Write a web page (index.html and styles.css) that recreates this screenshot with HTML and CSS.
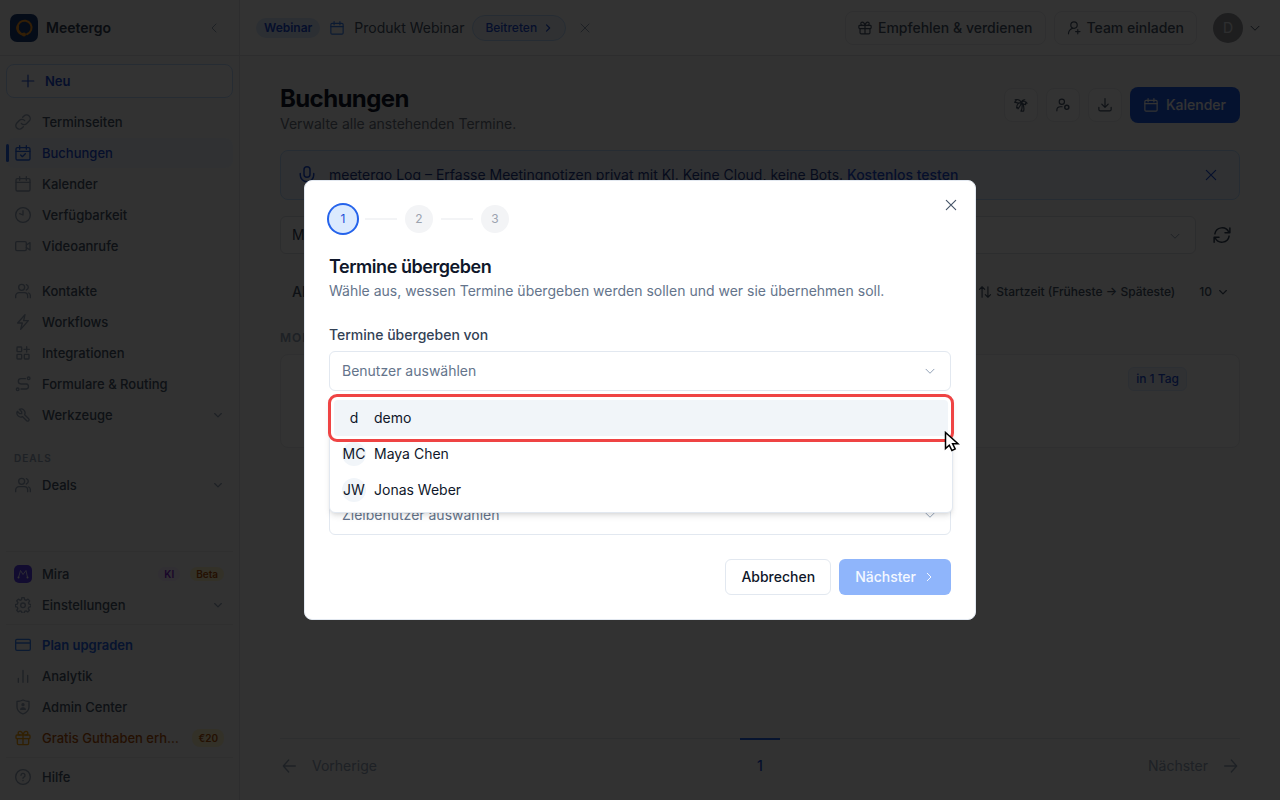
FILE: index.html
```html
<!DOCTYPE html>
<html lang="de">
<head>
    <meta charset="utf-8">
    <title>Buchungen - Meetergo</title>
    <link rel="stylesheet" href="styles.css">
</head>
<body>
    <svg class="sprite" aria-hidden="true">
        <symbol id="i-link" viewBox="0 0 24 24"><path d="M9.500 14a5.200 5.200 0 0 0 7.700.6l4-4a5.400 5.400 0 0 0-7.700-7.700l-2 2M14.500 10a5.200 5.200 0 0 0-7.700-.6l-4 4a5.400 5.400 0 0 0 7.700 7.700l2-2"/></symbol>
        <symbol id="i-calendar" viewBox="0 0 24 24"><rect x="1.500" y="4" width="21" height="18.500" rx="2"/><path d="M1.500 9.500h21M7 1v5.500M17 1v5.500"/></symbol>
        <symbol id="i-calendar-check" viewBox="0 0 24 24"><rect x="1.500" y="4" width="21" height="18.500" rx="2"/><path d="M1.500 9.500h21M7 1v5.500M17 1v5.500M8.500 15l2.500 2.500L15.500 13"/></symbol>
        <symbol id="i-clock" viewBox="0 0 24 24"><circle cx="12" cy="12" r="11"/><path d="M12 5.500V12L7 10"/></symbol>
        <symbol id="i-video" viewBox="0 0 24 24"><rect x="1" y="5.500" width="16" height="13.500" rx="2"/><path d="M17 10.500l5.500-3.500v11L17 14.500"/></symbol>
        <symbol id="i-users" viewBox="0 0 24 24"><circle cx="10" cy="6.500" r="4.500"/><path d="M1 22v-2.500a5 5 0 0 1 5-5h8a5 5 0 0 1 5 5V22M17 2.500a4.200 4.200 0 0 1 0 8M20.500 15a4.500 4.500 0 0 1 2.500 4.200V22"/></symbol>
        <symbol id="i-bolt" viewBox="0 0 24 24"><path d="M15 1L4 13.500h7L8.500 23 20 10h-7z"/></symbol>
        <symbol id="i-apps" viewBox="0 0 24 24"><rect x="3" y="3" width="7" height="7" rx="1"/><rect x="3" y="14" width="7" height="7" rx="1"/><rect x="14" y="14" width="7" height="7" rx="1"/><path d="M17.500 2.500v8M13.500 6.500h8"/></symbol>
        <symbol id="i-route" viewBox="0 0 24 24"><circle cx="20.500" cy="3.500" r="2"/><circle cx="4" cy="20" r="2"/><path d="M15.500 4H9a4 4 0 0 0 0 8h8a3.800 3.800 0 0 1 0 7.500H9"/></symbol>
        <symbol id="i-wrench" viewBox="0 0 24 24"><path d="M7 10h3V7L6.500 3.500a6 6 0 0 1 8 8l6 6a2.100 2.100 0 0 1-3 3l-6-6a6 6 0 0 1-8-8z"/></symbol>
        <symbol id="i-settings" viewBox="0 0 24 24"><path d="M10.200 1h3.600l.6 3 2.200 1 2.900-1.800 2.500 2.600-1.800 2.900 1 2.100 2.800.6v3l-3.100.8-.9 2.100 1.700 2.700-2.600 2.500-2.600-1.700-2.100.9-.7 2.500h-3.200l-.7-2.600-2.100-.9-2.700 1.700-2.400-2.500 1.600-2.600-.9-2.200-2.800-.7v-3l2.900-.7 1-2.200-1.800-2.800 2.500-2.500 2.600 1.700 2.200-.9z"/><circle cx="12" cy="12.500" r="3.500"/></symbol>
        <symbol id="i-card" viewBox="0 0 24 24"><rect x="1" y="3.500" width="22" height="16.500" rx="2"/><path d="M1 9h22"/></symbol>
        <symbol id="i-chart" viewBox="0 0 24 24"><path d="M5 21.500v-6M12 21.500V3.500M19 21.500V11"/></symbol>
        <symbol id="i-shield" viewBox="0 0 24 24"><path d="M12 1.500c3 1.500 6 2 9 2.200V12c0 5-4 8.500-9 10.500C7 20.500 3 17 3 12V3.700C6 3.500 9 3 12 1.500z"/><circle cx="12" cy="8.500" r="1.500" fill="currentColor"/><path d="M8.500 15.500c.5-3 6.500-3 7 0z" fill="currentColor"/></symbol>
        <symbol id="i-gift" viewBox="0 0 24 24"><rect x="1.500" y="7.500" width="21" height="5.500" rx="1.500"/><path d="M3.500 13v7a2 2 0 0 0 2 2h13a2 2 0 0 0 2-2v-7M12 7.500V22M12 7.500C11 3.500 9 2 7.500 2a2.500 2.500 0 0 0 0 5.500M12 7.500c1-4 3-5.500 4.500-5.500a2.500 2.500 0 0 1 0 5.500"/></symbol>
        <symbol id="i-help" viewBox="0 0 24 24"><circle cx="12" cy="12" r="11"/><path d="M9 9.500a3 3 0 1 1 4.300 2.700c-.9.400-1.300 1-1.300 1.800M12 17.200v.3"/></symbol>
        <symbol id="i-plus" viewBox="0 0 24 24"><path d="M12 2v20M2 12h20"/></symbol>
        <symbol id="i-down" viewBox="0 0 24 24"><path d="M4 8.500l8 8 8-8"/></symbol>
        <symbol id="i-left" viewBox="0 0 24 24"><path d="M16 4l-8 8 8 8"/></symbol>
        <symbol id="i-right" viewBox="0 0 24 24"><path d="M8.500 4.500L16 12l-7.500 7.500"/></symbol>
        <symbol id="i-close" viewBox="0 0 24 24"><path d="M4 4l16 16M20 4L4 20"/></symbol>
        <symbol id="i-user-plus" viewBox="0 0 24 24"><circle cx="12" cy="7" r="5.500"/><path d="M2.500 22c0-4 2.500-7.500 7-9.500M18.500 14.500v7.500M14.800 18.200h7.500"/></symbol>
        <symbol id="i-user-cog" viewBox="0 0 24 24"><circle cx="10" cy="6.500" r="4.500"/><path d="M1.500 22v-1.500c0-3.500 2.500-5.500 6-5.500h3"/><circle cx="18.500" cy="16" r="3.500" stroke-width="2.500"/></symbol>
        <symbol id="i-palm" viewBox="0 0 24 24"><path d="M13 8c2-3.500 7-3.500 9.500 1l-3-.5.500 3C17 11.500 15 10.500 13 8zM13 8C11 4.500 7 1.500 2 3l2 1.500L1 7c4 1.500 8 2 12 1zM13 8c-4-.5-8.500 2-8.500 9l2-.5.5 2C9.500 15.500 11.500 12 13 8zM13 8c0-3 2-5 5.500-5M13.500 10.500c1 4 .5 8-1.500 12h4.500c1-4 .500-8-1-12"/></symbol>
        <symbol id="i-download" viewBox="0 0 24 24"><path d="M12 1v15M6.500 10.500L12 16l5.500-5.500M1.500 16v3.500a2.500 2.500 0 0 0 2.500 2.500h16a2.500 2.500 0 0 0 2.500-2.500V16"/></symbol>
        <symbol id="i-mic" viewBox="0 0 24 24"><rect x="8" y="1" width="8" height="14" rx="4"/><path d="M3 10v2a9 9 0 0 0 18 0v-2M12 21v2"/></symbol>
        <symbol id="i-refresh" viewBox="0 0 24 24"><path d="M2.500 10.500a9.800 9.800 0 0 1 18.500-2.500M22.500 2.500V9H16M21.500 13.500A9.800 9.800 0 0 1 3 16M1.500 21.500V15H8"/></symbol>
        <symbol id="i-sort" viewBox="0 0 24 24"><path d="M7 21V3M2.500 7.500L7 3l4.500 4.500M17 3v18M12.500 16.500L17 21l4.500-4.500"/></symbol>
        <symbol id="i-arrow-left" viewBox="0 0 24 24"><path d="M20 12H2M10 3l-8 9 8 9"/></symbol>
        <symbol id="i-arrow-right" viewBox="0 0 24 24"><path d="M4 12h18M14 3l8 9-8 9"/></symbol>
    </svg>

    <div class="app">
        <aside class="sidebar">
            <div class="brand">
                <svg class="logo" viewBox="0 0 28 28"><rect width="28" height="28" rx="7" fill="#1d3f78"/><path d="M10 19a7 7 0 1 1 7 1.200" fill="none" stroke="#ff9a1f" stroke-width="2" stroke-linecap="round"/><path d="M14 20.500a6.500 6.500 0 0 1-6-9" fill="none" stroke="#ff9a1f" stroke-width="2.500"/><circle cx="14" cy="20.500" r="2" fill="#ff9a1f"/></svg>
                <span>Meetergo</span>
                <button class="plain" aria-label="Einklappen"><svg class="icon s12"><use href="#i-left"/></svg></button>
            </div>

            <button class="new"><svg class="icon s14"><use href="#i-plus"/></svg>Neu</button>

            <nav>
                <a href="#"><svg class="icon"><use href="#i-link"/></svg>Terminseiten</a>
                <a href="#" class="active"><svg class="icon"><use href="#i-calendar-check"/></svg>Buchungen</a>
                <a href="#"><svg class="icon"><use href="#i-calendar"/></svg>Kalender</a>
                <a href="#"><svg class="icon"><use href="#i-clock"/></svg>Verfügbarkeit</a>
                <a href="#"><svg class="icon"><use href="#i-video"/></svg>Videoanrufe</a>
            </nav>
            <nav>
                <a href="#"><svg class="icon"><use href="#i-users"/></svg>Kontakte</a>
                <a href="#"><svg class="icon"><use href="#i-bolt"/></svg>Workflows</a>
                <a href="#"><svg class="icon"><use href="#i-apps"/></svg>Integrationen</a>
                <a href="#"><svg class="icon"><use href="#i-route"/></svg>Formulare &amp; Routing</a>
                <a href="#"><svg class="icon"><use href="#i-wrench"/></svg>Werkzeuge<svg class="icon s10 end"><use href="#i-down"/></svg></a>
            </nav>
            <h2 class="group">DEALS</h2>
            <nav>
                <a href="#"><svg class="icon"><use href="#i-users"/></svg>Deals<svg class="icon s10 end"><use href="#i-down"/></svg></a>
            </nav>

            <div class="bottom">
                <nav>
                    <a href="#"><svg class="mira" viewBox="0 0 18 18"><rect width="18" height="18" rx="5" fill="#5b3df0"/><path d="M4.500 12.500l2-7 2.500 4 3-4 1.500 7" fill="none" stroke="#d9d2ff"/><circle cx="4.500" cy="12.500" r="1" fill="#fff"/><circle cx="13.500" cy="12.500" r="1" fill="#fff"/></svg>Mira<span class="tag ki end">KI</span><span class="tag beta">Beta</span></a>
                    <a href="#"><svg class="icon"><use href="#i-settings"/></svg>Einstellungen<svg class="icon s10 end"><use href="#i-down"/></svg></a>
                </nav>
                <nav>
                    <a href="#" class="upgrade"><svg class="icon"><use href="#i-card"/></svg>Plan upgraden</a>
                    <a href="#"><svg class="icon"><use href="#i-chart"/></svg>Analytik</a>
                    <a href="#"><svg class="icon"><use href="#i-shield"/></svg>Admin Center</a>
                    <a href="#" class="credit"><svg class="icon"><use href="#i-gift"/></svg><span class="cut">Gratis Guthaben erhalten</span><span class="tag euro">€20</span></a>
                </nav>
                <nav>
                    <a href="#"><svg class="icon"><use href="#i-help"/></svg>Hilfe</a>
                </nav>
            </div>
        </aside>

        <div class="page">
            <header class="topbar">
                <span class="pill">Webinar</span>
                <svg class="icon s14 blue"><use href="#i-calendar"/></svg>
                <span class="event">Produkt Webinar</span>
                <button class="join">Beitreten<svg class="icon s10"><use href="#i-right"/></svg></button>
                <button class="plain dismiss" aria-label="Schließen"><svg class="icon s12"><use href="#i-close"/></svg></button>
                <button class="outline refer"><svg class="icon s14"><use href="#i-gift"/></svg>Empfehlen &amp; verdienen</button>
                <button class="outline"><svg class="icon s14"><use href="#i-user-plus"/></svg>Team einladen</button>
                <button class="plain account" aria-label="Konto"><span class="initial">D</span><svg class="icon s12"><use href="#i-down"/></svg></button>
            </header>

            <main>
                <div class="heading">
                    <div>
                        <h1>Buchungen</h1>
                        <p>Verwalte alle anstehenden Termine.</p>
                    </div>
                    <div class="actions">
                        <button class="square" aria-label="Abwesenheit"><svg class="icon s14"><use href="#i-palm"/></svg></button>
                        <button class="square" aria-label="Termine übergeben"><svg class="icon s14"><use href="#i-user-cog"/></svg></button>
                        <button class="square" aria-label="Exportieren"><svg class="icon s14"><use href="#i-download"/></svg></button>
                        <button class="primary"><svg class="icon s14"><use href="#i-calendar"/></svg>Kalender</button>
                    </div>
                </div>

                <div class="banner">
                    <svg class="icon s18"><use href="#i-mic"/></svg>
                    <p>meetergo Log – Erfasse Meetingnotizen privat mit KI. Keine Cloud, keine Bots. <a href="#">Kostenlos testen</a></p>
                    <button class="plain" aria-label="Hinweis schließen"><svg class="icon s14"><use href="#i-close"/></svg></button>
                </div>

                <div class="filter">
                    <div class="select">
                        <select aria-label="Filter"><option>Meine Buchungen</option></select>
                        <svg class="icon s12"><use href="#i-down"/></svg>
                    </div>
                    <button class="plain" aria-label="Aktualisieren"><svg class="icon s18"><use href="#i-refresh"/></svg></button>
                </div>

                <div class="tabs">
                    <button class="plain tab">Alle</button>
                    <button class="plain sort"><svg class="icon s14"><use href="#i-sort"/></svg>Startzeit (Früheste → Späteste)</button>
                    <button class="plain count">10<svg class="icon s10"><use href="#i-down"/></svg></button>
                </div>

                <h2 class="day">MONTAG</h2>
                <div class="card"><span class="when">in 1 Tag</span></div>

                <div class="pagination">
                    <a href="#"><svg class="icon"><use href="#i-arrow-left"/></svg>Vorherige</a>
                    <a href="#" class="current">1</a>
                    <a href="#" class="next">Nächster<svg class="icon"><use href="#i-arrow-right"/></svg></a>
                </div>
            </main>
        </div>
    </div>

    <div class="overlay">
        <div class="modal" role="dialog" aria-labelledby="modalTitle">
            <button class="plain close" aria-label="Schließen"><svg class="icon s14"><use href="#i-close"/></svg></button>
            <div class="steps">
                <span class="step on">1</span><i></i><span class="step">2</span><i></i><span class="step">3</span>
            </div>
            <h2 id="modalTitle">Termine übergeben</h2>
            <p>Wähle aus, wessen Termine übergeben werden sollen und wer sie übernehmen soll.</p>

            <div class="field">
                <label for="from">Termine übergeben von</label>
                <div class="select">
                    <select id="from"><option>Benutzer auswählen</option></select>
                    <svg class="icon s12"><use href="#i-down"/></svg>
                </div>
                <ul class="options" role="listbox">
                    <li class="selected" role="option"><span>d</span>demo</li>
                    <li role="option"><span>MC</span>Maya Chen</li>
                    <li role="option"><span>JW</span>Jonas Weber</li>
                </ul>
                <svg class="cursor" viewBox="0 0 16 22"><path d="M1.500 1.500v16l3.800-3.400 2.600 5.400 3.300-1.500-2.600-5.200h5.400z" fill="#fff" stroke="#000" stroke-width="1.500"/></svg>
            </div>

            <div class="field target">
                <div class="select">
                    <select id="to" aria-label="Zielbenutzer"><option>Zielbenutzer auswählen</option></select>
                    <svg class="icon s12"><use href="#i-down"/></svg>
                </div>
            </div>

            <div class="buttons">
                <button class="cancel">Abbrechen</button>
                <button class="forward" disabled>Nächster<svg class="icon s12"><use href="#i-right"/></svg></button>
            </div>
        </div>
    </div>
</body>
</html>
```

FILE: styles.css
```css
* { box-sizing: border-box; }
body { margin: 0; font-family: Inter, "Liberation Sans", sans-serif; font-size: 14px; line-height: 20px; color: #0f172a; }
h1, h2, p, ul { margin: 0; padding: 0; }
a { color: inherit; text-decoration: none; }
button, select { font: inherit; color: inherit; }
button { display: flex; align-items: center; justify-content: center; white-space: nowrap; padding: 0; border: 1px solid transparent; border-radius: 6px; background: none; }
.plain { border: none; }

.sprite { display: none; }
.icon { width: 16px; height: 16px; flex: none; fill: none; stroke: currentColor; stroke-width: 2; stroke-linecap: round; stroke-linejoin: round; }
.s10 { width: 10px; height: 10px; stroke-width: 3; }
.s12 { width: 12px; height: 12px; }
.s14 { width: 14px; height: 14px; }
.s18 { width: 18px; height: 18px; }

.app { display: flex; min-height: 100vh; }

/* sidebar */
.sidebar { display: flex; flex-direction: column; width: 240px; flex: none; background: #f8f8f8; border-right: 1px solid #dfe1e4; padding-bottom: 4px; }
.brand { display: flex; align-items: center; gap: 8px; height: 56px; padding: 0 19px 0 10px; border-bottom: 1px solid #dfe1e4; font-weight: 600; color: #334155; }
.brand button { margin-left: auto; color: #94a3b8; }
.logo { width: 28px; height: 28px; }
.new { justify-content: flex-start; gap: 10px; height: 34px; margin: 8px 6px 9px; padding: 0 14px; border-color: #bfdbfe; border-radius: 8px; background: #fcfcfc; color: #1d4ed8; font-size: 13px; font-weight: 600; }
nav { display: flex; flex-direction: column; gap: 1px; padding: 0 6px; font-size: 13px; font-weight: 500; color: #475569; }
nav + nav { margin-top: 15px; }
nav a { position: relative; display: flex; align-items: center; gap: 10px; height: 30px; padding: 0 9px; border-radius: 8px; }
nav a .icon { margin-right: 1px; color: #94a3b8; }
nav a .end { margin-left: auto; }
nav .active { background: #eff6ff; color: #1d4ed8; }
nav .active .icon { color: #2563eb; }
.active::before { content: ""; position: absolute; left: 0; top: 6px; width: 3px; height: 18px; border-radius: 2px; background: #2563eb; }
.group { margin: 20px 14px 4px; font-size: 10px; line-height: 16px; font-weight: 600; letter-spacing: 1px; color: #94a3b8; }
.bottom { margin-top: auto; }
.bottom nav { margin: 0 6px; padding: 4px 0; border-top: 1px solid #e9eaec; }
.bottom nav:first-child { padding-top: 7px; }
.bottom nav:nth-child(2) { padding-top: 5px; }
.mira { width: 18px; height: 18px; margin-left: -1px; }
.tag { padding: 0 6px; border-radius: 8px; font-size: 10px; line-height: 14px; font-weight: 600; }
.ki { background: #f3e8ff; color: #7e22ce; }
.beta { background: #fef3c7; color: #b45309; }
.euro { background: #fef3c7; color: #b45309; line-height: 18px; }
nav .upgrade { color: #2563eb; font-weight: 600; }
nav .upgrade .icon { color: #3b82f6; }
nav .credit { color: #b45309; }
nav .credit .icon { color: #f59e0b; }
.cut { flex: 1; overflow: hidden; white-space: nowrap; text-overflow: ellipsis; }

/* top bar */
.page { display: flex; flex-direction: column; flex: 1; min-width: 0; background: #f8faf9; }
.topbar { display: flex; align-items: center; height: 56px; padding: 0 19px 0 16px; background: #fff; border-bottom: 1px solid #dfe1e4; color: #475569; }
.pill { padding: 0 8px; margin-right: 10px; border-radius: 10px; background: #dbeafe; color: #1d4ed8; font-size: 12px; font-weight: 600; }
.blue { color: #3b82f6; }
.event { margin: 0 8px 0 10px; }
.join { gap: 6px; height: 26px; padding: 0 12px; border-color: #bfdbfe; border-radius: 13px; background: #eff6ff; color: #1d4ed8; font-size: 12px; font-weight: 500; }
.dismiss { margin-left: 13px; color: #94a3b8; }
.outline { gap: 6px; height: 34px; padding: 0 12px; margin-right: 8px; border-color: #e9ebee; border-radius: 8px; font-weight: 500; }
.refer { margin-left: auto; }
.account { gap: 6px; margin-left: 8px; }
.initial { width: 30px; border-radius: 50%; background: #94979c; color: #e5e7eb; line-height: 30px; }

/* bookings */
main { display: flex; flex-direction: column; flex: 1; padding: 28px 40px 7px; }
.heading { display: flex; justify-content: space-between; margin-bottom: 16px; }
h1 { font-size: 24px; line-height: 30px; font-weight: 700; letter-spacing: -0.025em; }
.heading p { color: #6b7280; }
.actions { display: flex; align-items: center; gap: 8px; height: 42px; color: #475569; }
.square { width: 34px; height: 34px; border-color: #e9ebee; border-radius: 8px; background: #fcfcfc; }
.primary { gap: 8px; height: 36px; padding: 0 13px; border-radius: 8px; background: #1d5bea; color: #fff; font-weight: 500; }
.banner { display: flex; align-items: center; gap: 13px; height: 50px; padding: 0 21px 0 17px; border: 1px solid #bfdbfe; border-radius: 8px; background: #eff6ff; color: #1e3a8a; }
.banner a { font-weight: 500; color: #1d4ed8; }
.banner .icon { color: #1d4ed8; }
.banner button { margin-left: auto; }
.filter { display: flex; align-items: center; gap: 17px; margin-top: 16px; padding-right: 9px; color: #334155; }
.select { position: relative; flex: 1; }
.select select { display: block; width: 100%; height: 40px; padding: 0 12px; border: 1px solid #e2e8f0; border-radius: 6px; background: #fff; appearance: none; }
.select .icon { position: absolute; right: 15px; top: 14px; color: #94a3b8; pointer-events: none; }
.filter select { height: 38px; padding: 0 11px; border-color: #dcdfe3; }
.tabs { display: flex; align-items: center; margin: 28px 12px 0; color: #475569; font-size: 12px; font-weight: 500; }
.tab { font-size: 14px; }
.sort { gap: 4px; margin-left: auto; }
.count { gap: 6px; margin-left: 24px; }
.day { margin: 26px 0 6px; font-size: 12px; font-weight: 600; letter-spacing: 1px; color: #94a3b8; }
.card { display: flex; justify-content: flex-end; align-items: flex-start; height: 94px; padding: 12px 52px; border: 1px solid #e9ebee; border-radius: 8px; background: #fcfcfc; }
.when { padding: 0 7px; border: 1px solid #dbeafe; border-radius: 6px; background: #eff6ff; color: #1d4ed8; font-size: 12px; line-height: 22px; font-weight: 500; }
.pagination { display: flex; margin-top: auto; border-top: 1px solid #e2e5e8; color: #94a3b8; }
.pagination a { display: flex; flex: 1; align-items: center; gap: 14px; height: 54px; padding: 0 2px; }
.pagination .current { flex: none; justify-content: center; width: 40px; margin-top: -1px; border-top: 2px solid #2563eb; color: #1d4ed8; font-weight: 500; }
.pagination .next { justify-content: flex-end; }

/* dialog */
.overlay { position: fixed; inset: 0; display: flex; align-items: center; justify-content: center; background: rgba(0, 0, 0, 0.8); }
.modal { position: relative; width: 672px; padding: 24px; border: 1px solid #e2e8f0; border-radius: 8px; background: #fff; }
.close { position: absolute; top: 17px; right: 17px; color: #475569; }
.steps { display: flex; align-items: center; gap: 8px; margin-bottom: 24px; }
.step { width: 28px; border-radius: 50%; background: #f3f4f6; color: #9ca3af; font-size: 12px; line-height: 28px; text-align: center; }
.step.on { background: #dbeafe; color: #1d4ed8; box-shadow: 0 0 0 2px #2563eb; }
.steps i { width: 32px; height: 2px; background: #f3f4f6; }
.modal h2 { margin-bottom: 4px; font-size: 18px; line-height: 20px; font-weight: 600; letter-spacing: -0.025em; }
.modal p { color: #64748b; }
.field { position: relative; margin-top: 24px; }
.field label { display: block; margin-bottom: 6px; font-weight: 500; color: #334155; }
.field select { color: #64748b; }
.target { margin-top: 104px; }
.options { position: absolute; z-index: 1; top: 70px; left: 0; right: -2px; padding: 4px; border: 1px solid #e2e8f0; border-radius: 6px; background: #fff; box-shadow: 0 4px 6px -1px rgba(0, 0, 0, 0.1), 0 2px 4px -2px rgba(0, 0, 0, 0.1); list-style: none; }
.options li { position: relative; display: flex; align-items: center; gap: 8px; height: 36px; padding: 0 8px; border-radius: 4px; }
.options span { display: flex; justify-content: center; width: 24px; border-radius: 50%; background: #f1f5f9; line-height: 24px; }
.options .selected { background: #f1f5f9; }
.selected::after { content: ""; position: absolute; inset: -6px; border: 3px solid #ef4444; border-radius: 9px; }
.cursor { position: absolute; z-index: 2; top: 106px; right: -9px; width: 16px; height: 22px; }
.buttons { display: flex; justify-content: flex-end; gap: 8px; margin-top: 24px; font-weight: 500; }
.buttons button { height: 36px; padding: 0 16px; }
.buttons .cancel { padding: 0 15px; border-color: #e2e8f0; }
.buttons .forward { gap: 7px; border: none; background: #8fb5fb; color: #f4f8ff; }
```
